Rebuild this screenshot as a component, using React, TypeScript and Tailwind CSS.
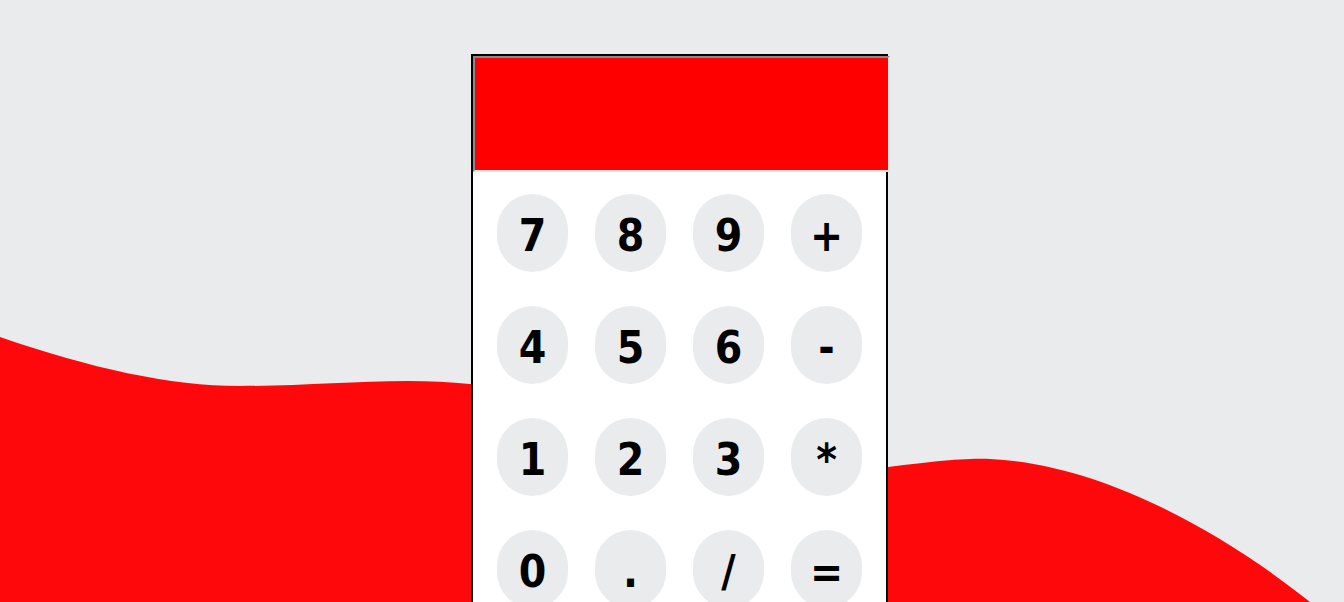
const keys = ["7", "8", "9", "+", "4", "5", "6", "-", "1", "2", "3", "*", "0", ".", "/", "="];

const Wave = () => (
  <svg
    className="absolute inset-0 h-[602px] w-[1344px]"
    viewBox="0 0 1344 602"
    aria-hidden="true"
  >
    <path
      fill="#ff080b"
      d="M0 337 C 90 368 170 386 240 386 C 320 386 400 376 470 384 C 620 400 760 470 880 468 C 930 462 960 458 990 459 C 1100 464 1220 530 1310 602 L 0 602 Z"
    />
  </svg>
);

export default function App() {
  return (
    <div className="relative h-[602px] w-full overflow-hidden bg-[#eaebed] font-['DejaVu_Sans_Condensed','DejaVu_Sans',sans-serif]">
      <Wave />
      <div className="relative flex justify-center pl-[15px] pt-[54px]">
        <div className="w-[417px] border-2 border-black bg-white">
          <input
            type="text"
            readOnly
            className="block h-[116px] w-[417px] border-2 border-t-[#8a8a8a] border-l-[#8a8a8a] border-b-[#e3e3e3] border-r-[#e3e3e3] bg-[#ff0000] outline-none"
          />
          <div className="grid grid-cols-4 gap-x-[27px] gap-y-[34px] px-[24px] pb-8 pt-[22px]">
            {keys.map((k) => (
              <button
                key={k}
                className="flex h-[78px] w-[71px] items-center justify-center rounded-full bg-[#eaebed] pt-[5px] text-[44px] font-bold leading-none text-black"
              >
                {k}
              </button>
            ))}
          </div>
        </div>
      </div>
    </div>
  );
}
